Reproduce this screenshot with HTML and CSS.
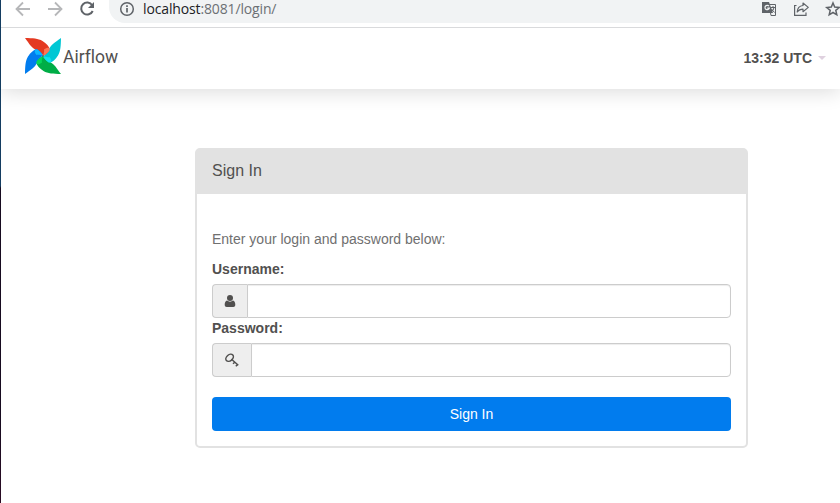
FILE: index.html
```html
<!DOCTYPE html>
<html lang="en">
<head>
<meta charset="utf-8">
<title>Airflow - Sign In</title>
<link rel="stylesheet" href="styles.css">
</head>
<body>
<div class="desktop-edge"></div>
<div class="window">
  <div class="toolbar">
    <svg class="controls" width="108" height="27" viewBox="0 0 108 27" fill="none" stroke-width="1.8">
      <path stroke="#b6b7b9" d="M30 9H17M23 2.500L16.500 9L23 15.500M48 9H61M55 2.500L61.500 9L55 15.500"/>
      <path stroke="#5f6368" stroke-width="2" d="M92.200 5.200A6 6 0 1 0 92.700 11"/>
      <path fill="#5f6368" d="M94 2V8H88Z"/>
    </svg>
    <div class="address">
      <svg class="info" width="16" height="16" viewBox="0 0 16 16" fill="none" stroke="#5f6368" stroke-width="1.500"><circle cx="8" cy="8" r="6.300"/><path stroke-width="1.700" d="M8 7V11.500M8 4.300V6"/></svg>
      <span class="url"><b>localhost</b>:8081/login/</span>
      <svg class="actions" width="80" height="20" viewBox="760 0 80 20" fill="none" stroke="#5f6368" stroke-width="1.200">
        <path fill="#f1f3f4" stroke-width="1" d="M769 4.500H775.500V15.500H771Z"/>
        <path fill="#5f6368" stroke="none" d="M762 2H769L773 13H762Z"/>
        <path stroke="#f1f3f4" d="M769 6.200A2.200 2.200 0 1 0 769.300 8.200H767.200"/>
        <path stroke-width="1" d="M770.500 7.500H775M773 6V7.500M774 7.500Q773.500 10.500 771.500 11.500M771.500 9L774.500 12.500"/>
        <path d="M796.500 5.500H794.600V15.400H806V12.500"/>
        <path stroke-linejoin="round" d="M803 3L808.300 7.400L803 11.700V9.200C800 9.200 798.500 10.200 797.200 12C797.400 8.500 799.500 5.800 803 5.500Z"/>
        <path stroke-width="1.500" d="M833 3L834.700 7.100L839.200 7.500L835.800 10.400L836.800 14.800L833 12.500L829.200 14.800L830.200 10.400L826.800 7.500L831.300 7.100Z"/>
      </svg>
    </div>
  </div>
  <nav class="navbar">
    <a class="brand">
      <svg width="38" height="38" viewBox="0 0 38 38">
        <defs>
          <path id="blade" d="M1 1C9 1.200 14 1.300 18.500 4C22.500 6.500 25 9.500 26 12.500C24.500 16 22 18 19 19C18 16 15.500 13.800 12 12.800C7.500 11 5.500 7 1 1Z"/>
          <path id="fold" d="M20 12.500C22 10.800 24 10.300 25.300 11L25.800 13C24 16 21.500 17.500 19 19C19.800 16.500 20.500 14.500 20 12.500Z"/>
        </defs>
        <use href="#blade" fill="#e43921"/>
        <use href="#blade" fill="#00c7d4" transform="rotate(90 19 19)"/>
        <use href="#blade" fill="#00ad46" transform="rotate(180 19 19)"/>
        <use href="#blade" fill="#017cee" transform="rotate(270 19 19)"/>
        <use href="#fold" fill="#ff7557"/>
        <use href="#fold" fill="#11e1ee" transform="rotate(90 19 19)"/>
        <use href="#fold" fill="#04d659" transform="rotate(180 19 19)"/>
        <use href="#fold" fill="#0cb6ff" transform="rotate(270 19 19)"/>
        <circle cx="19" cy="19" r=".8" fill="#51504f"/>
      </svg>
      <span>Airflow</span>
    </a>
    <div class="clock">13:32 UTC<i class="caret"></i></div>
  </nav>
  <main class="page">
    <section class="panel">
      <h1 class="panel-heading">Sign In</h1>
      <form class="panel-body">
        <p class="help">Enter your login and password below:</p>
        <label for="username">Username:</label>
        <div class="input-group">
          <span class="addon"><svg width="12" height="14" viewBox="0 0 12 14" fill="#51504f"><circle cx="6" cy="4" r="3"/><path d="M3 6.500C1.500 6.800.7 8.500.7 10.700C.7 12 1.600 13 2.700 13H9.300C10.400 13 11.300 12 11.300 10.700C11.300 8.500 10.500 6.800 9 6.500C7.300 8 4.700 8 3 6.500Z"/></svg></span>
          <input id="username" type="text">
        </div>
        <label for="password">Password:</label>
        <div class="input-group">
          <span class="addon key"><svg width="14" height="14" viewBox="0 0 14 14" fill="none" stroke="#51504f" stroke-width="1.500"><ellipse cx="4.600" cy="4.800" rx="4.200" ry="3" transform="rotate(-40 4.600 4.800)"/><path d="M6.500 6.300L13.300 12.200M8 10.800L10 9M10.800 13.200L12.900 11.200"/></svg></span>
          <input id="password" type="password">
        </div>
        <button type="button">Sign In</button>
      </form>
    </section>
  </main>
</div>
</body>
</html>
```
FILE: styles.css
```css
* { box-sizing: border-box; }
body {
  margin: 0;
  height: 503px;
  display: flex;
  overflow: hidden;
  background: #fff;
  color: #51504f;
  font: 14px/20px "Liberation Sans", Arial, sans-serif;
}
.desktop-edge {
  width: 1px;
  background: linear-gradient(#143d61 0 186px, #170b20 188px 420px, #2b0b24);
}
.window { flex: 1; min-width: 0; }
.toolbar {
  height: 28px;
  display: flex;
  align-items: flex-start;
  border-bottom: 1px solid #d9dadc;
}
.controls { margin-left: -1px; flex: none; }
.address {
  flex: 1;
  height: 23px;
  margin-left: 1px;
  padding-left: 10px;
  display: flex;
  background: #f1f3f4;
  border-bottom-left-radius: 16px;
}
.info { margin-top: 1px; flex: none; }
.url {
  margin-left: 8px;
  font: 14px/18px "Open Sans", sans-serif;
  letter-spacing: -.14px;
  color: #6c7074;
  white-space: nowrap;
}
.url b { font-weight: 400; color: #202124; }
.actions { margin-left: auto; flex: none; }
.navbar {
  height: 61px;
  padding: 0 14px 0 23px;
  display: flex;
  align-items: center;
  justify-content: space-between;
  box-shadow: 0 3px 20px rgba(0, 0, 0, .14);
  clip-path: inset(0 0 -40px 0);
}
.brand {
  display: flex;
  align-items: center;
  font: 17.5px/20px Roboto, sans-serif;
  margin-top: -5px;
}
.brand span { margin-left: 1px; padding-top: 2px; letter-spacing: 0.01px; font-variant-ligatures: common-ligatures; }
.clock { display: flex; align-items: center; margin-top: -1px; font-weight: 700; }
.caret {
  margin-left: 6px;
  border: 4px solid transparent;
  border-top-color: #dfd1df;
  border-bottom: 0;
}
.page { padding: 59px 92px 0 194px; }
.panel {
  width: 553px;
  height: 300px;
  border: 2px solid #e2e2e2;
  border-radius: 5px;
}
.panel-heading {
  margin: 0;
  height: 44px;
  padding: 11px 15px;
  background: #e2e2e2;
  font-size: 16px;
  line-height: 20px;
  font-weight: 400;
}
.panel-body { padding: 35px 15px 15px; }
.help { margin: 0 0 10px; color: #707070; }
label { display: block; height: 25px; font-weight: 700; }
.input-group { display: flex; height: 34px; }
.addon {
  width: 35px;
  display: flex;
  align-items: center;
  justify-content: center;
  background: #eee;
  border: 1px solid #ccc;
  border-right: 0;
  border-radius: 4px 0 0 4px;
}
.key { width: 39px; }
input {
  flex: 1;
  min-width: 0;
  border: 1px solid #ccc;
  border-radius: 0 4px 4px 0;
  background: #fff;
  box-shadow: inset 0 1px 1px rgba(0, 0, 0, .075);
}
button {
  width: 100%;
  height: 34px;
  margin-top: 20px;
  padding: 0;
  border: 0;
  border-radius: 4px;
  background: #017cee;
  color: #fff;
  font: inherit;
}
```
